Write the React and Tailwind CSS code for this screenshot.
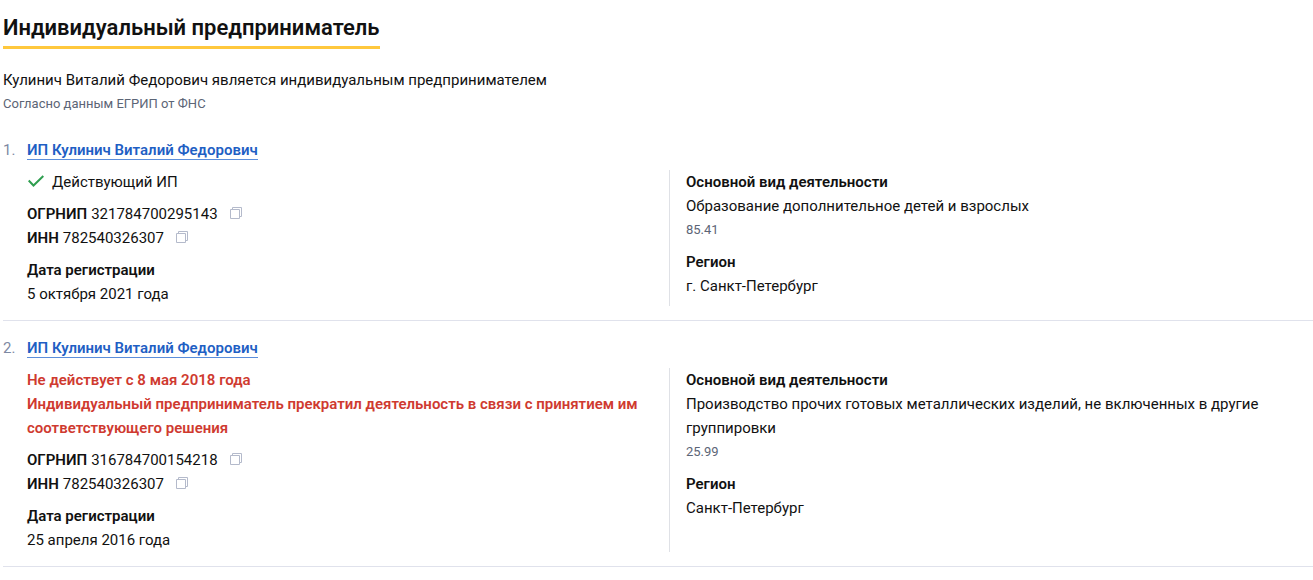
import React from "react";

const entries = [
  {
    active: true,
    status: ["Действующий ИП"],
    ogrnip: "321784700295143",
    inn: "782540326307",
    registered: "5 октября 2021 года",
    activity: "Образование дополнительное детей и взрослых",
    code: "85.41",
    region: "г. Санкт-Петербург",
  },
  {
    active: false,
    status: [
      "Не действует с 8 мая 2018 года",
      "Индивидуальный предприниматель прекратил деятельность в связи с принятием им соответствующего решения",
    ],
    ogrnip: "316784700154218",
    inn: "782540326307",
    registered: "25 апреля 2016 года",
    activity:
      "Производство прочих готовых металлических изделий, не включенных в другие группировки",
    code: "25.99",
    region: "Санкт-Петербург",
  },
];

function CheckIcon() {
  return (
    <svg className="h-4 w-4 shrink-0" viewBox="0 0 16 16" fill="none" stroke="#2f9e4f" strokeWidth="2" aria-hidden="true">
      <path d="M.7 6.5 5.5 11.5 15.3 2" />
    </svg>
  );
}

function CopyButton({ label }) {
  return (
    <button type="button" aria-label={label} className="ml-3 cursor-pointer pb-[2px]">
      <svg className="h-3 w-3" viewBox="0 0 12 12" fill="none" stroke="#b4bacb" aria-hidden="true">
        <path d="M.5 2.5h9v9h-9z" />
        <path d="M2.5 2.5v-2h9v9h-2" />
      </svg>
    </button>
  );
}

function Requisite({ name, value }) {
  return (
    <div className="flex items-center">
      <dt className="mr-1 font-semibold">{name}</dt>
      <dd className="flex items-center">
        {value}
        <CopyButton label={`Скопировать ${name}`} />
      </dd>
    </div>
  );
}

function Entry({ number, entry }) {
  return (
    <li className="mb-[15px] flex border-b border-[#e0e2ec] pb-[14px]">
      <span className="w-6 shrink-0 text-[#7d89a3]">{number}.</span>
      <div className="min-w-0 grow">
        <h3>
          <a href="#" className="inline-block border-b border-[#5b8edb] font-semibold leading-[18px] text-[#1f5fc4]">
            ИП Кулинич Виталий Федорович
          </a>
        </h3>
        <div className="mt-2 grid grid-cols-2 pr-[2px]">
          <div className="flex flex-col gap-2 pr-4">
            {entry.active ? (
              <p className="flex items-center gap-2 pl-px">
                <CheckIcon />
                {entry.status[0]}
              </p>
            ) : (
              <div className="font-semibold text-[#cf3a30]">
                {entry.status.map((line) => (
                  <p key={line}>{line}</p>
                ))}
              </div>
            )}
            <dl>
              <Requisite name="ОГРНИП" value={entry.ogrnip} />
              <Requisite name="ИНН" value={entry.inn} />
            </dl>
            <dl>
              <dt className="font-semibold">Дата регистрации</dt>
              <dd>{entry.registered}</dd>
            </dl>
          </div>
          <dl className="border-l border-[#dfe1e6] pl-4">
            <dt className="font-semibold">Основной вид деятельности</dt>
            <dd>{entry.activity}</dd>
            <dd className="text-[13px] leading-6 text-[#5c6576]">{entry.code}</dd>
            <dt className="mt-2 font-semibold">Регион</dt>
            <dd>{entry.region}</dd>
          </dl>
        </div>
      </div>
    </li>
  );
}

export default function App() {
  return (
    <main className="bg-white pl-[3px] pt-3 font-[Roboto,'Noto_Sans',sans-serif] text-[15px] leading-6 text-[#111]">
      <h2 className="w-fit border-b-3 border-[#ffc83d] pb-[2px] text-[22px] font-semibold leading-8">
        Индивидуальный предприниматель
      </h2>
      <p className="mt-[19px]">Кулинич Виталий Федорович является индивидуальным предпринимателем</p>
      <p className="text-[13px] leading-6 text-[#5c6576]">Согласно данным ЕГРИП от ФНС</p>
      <ol className="mt-[22px]">
        {entries.map((entry, index) => (
          <Entry key={entry.ogrnip} number={index + 1} entry={entry} />
        ))}
      </ol>
    </main>
  );
}
